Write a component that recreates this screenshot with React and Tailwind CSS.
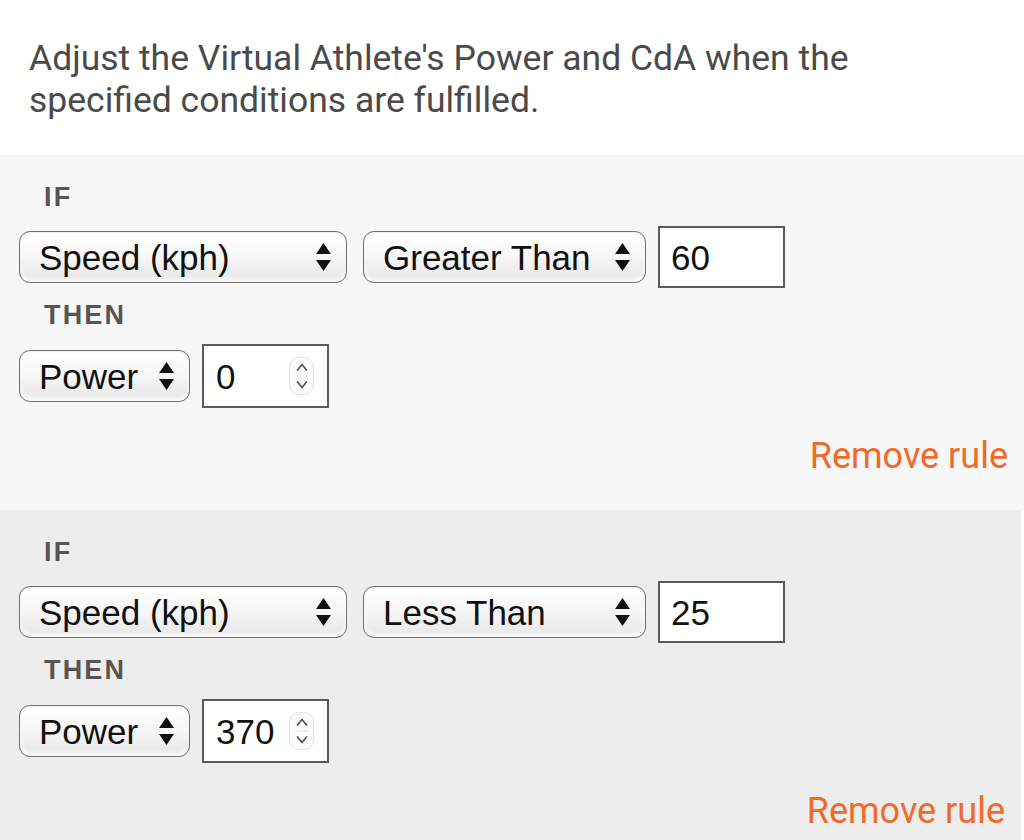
import React from 'react'

const Arrows = () => (
  <svg width="15" height="28" viewBox="0 0 15 28" className="shrink-0">
    <path d="M7.5 0 L15 11 L0 11 Z" fill="#111" />
    <path d="M0 17 L15 17 L7.5 28 Z" fill="#111" />
  </svg>
)

const Select = ({ label, width }) => (
  <div
    className="flex h-[52px] items-center justify-between rounded-[11px] border-[1.5px] border-[#707070] bg-gradient-to-b from-white via-[#f6f6f6] to-[#e6e6e6] pl-[19px] pr-[15px] shadow-[inset_0_-3px_4px_rgba(255,255,255,0.9),inset_0_1px_2px_rgba(0,0,0,0.08)]"
    style={{ width }}
  >
    <span className="text-[35px] leading-none text-[#111] [font-family:'Liberation_Sans',Arial,sans-serif]">{label}</span>
    <Arrows />
  </div>
)

const TextInput = ({ value }) => (
  <div className="flex h-[62px] w-[127px] items-center border-2 border-[#595959] bg-white pl-[11px]">
    <span className="text-[35px] leading-none text-[#111] [font-family:'Liberation_Sans',Arial,sans-serif]">{value}</span>
  </div>
)

const NumberInput = ({ value }) => (
  <div className="flex h-[64px] w-[127px] items-center justify-between border-2 border-[#595959] bg-white pl-[12px] pr-[13px]">
    <span className="text-[35px] leading-none text-[#111] [font-family:'Liberation_Sans',Arial,sans-serif]">{value}</span>
    <div className="flex h-[38px] w-[25px] flex-col items-center justify-center rounded-[10px] border border-[#e2e2e2] bg-[#fbfbfb]">
      <svg width="14" height="34" viewBox="0 0 14 34" fill="none" stroke="#555" strokeWidth="1.7" strokeLinecap="round" strokeLinejoin="round">
        <path d="M2.5 11 L7 5.5 L11.5 11" />
        <path d="M0 17 L14 17" stroke="#e6e6e6" strokeWidth="1" />
        <path d="M2.5 23 L7 28.5 L11.5 23" />
      </svg>
    </div>
  </div>
)

const Label = ({ children }) => (
  <div className="flex h-[36px] items-center pl-[44px] text-[27px] font-bold tracking-[0.08em] text-[#555] [font-family:'Liberation_Sans',Arial,sans-serif]">
    {children}
  </div>
)

const Rule = ({ field, op, value, target, amount, bg }) => (
  <div className={`${bg} pt-[24px] pb-[37px]`}>
    <Label>IF</Label>
    <div className="mt-[11px] flex h-[62px] items-center pl-[19px]">
      <Select label={field} width={328} />
      <div className="ml-[16px]">
        <Select label={op} width={283} />
      </div>
      <div className="ml-[12px]">
        <TextInput value={value} />
      </div>
    </div>
    <div className="mt-[9px]">
      <Label>THEN</Label>
    </div>
    <div className="mt-[11px] flex h-[64px] items-center pl-[19px]">
      <Select label={target} width={171} />
      <div className="ml-[12px]">
        <NumberInput value={amount} />
      </div>
    </div>
    <div className="mt-[31px] flex h-[34px] items-center justify-end pr-[16px]">
      <span className="text-[36px] leading-none text-[#f06a2a] [font-family:Roboto,'Noto_Sans',sans-serif]">Remove rule</span>
    </div>
  </div>
)

export default function App() {
  return (
    <div className="h-[840px] w-[1024px] overflow-hidden bg-white">
      <div className="h-[155px] px-[29px] pt-[37px]">
        <p className="w-[860px] text-[35.5px] leading-[42px] text-[#4a4a4a] [font-family:Roboto,'Noto_Sans',sans-serif]">
          Adjust the Virtual Athlete's Power and CdA when the specified conditions are fulfilled.
        </p>
      </div>
      <Rule field="Speed (kph)" op="Greater Than" value="60" target="Power" amount="0" bg="bg-[#f7f7f7]" />
      <Rule field="Speed (kph)" op="Less Than" value="25" target="Power" amount="370" bg="bg-[#ededed] w-[1021px]" />
    </div>
  )
}
